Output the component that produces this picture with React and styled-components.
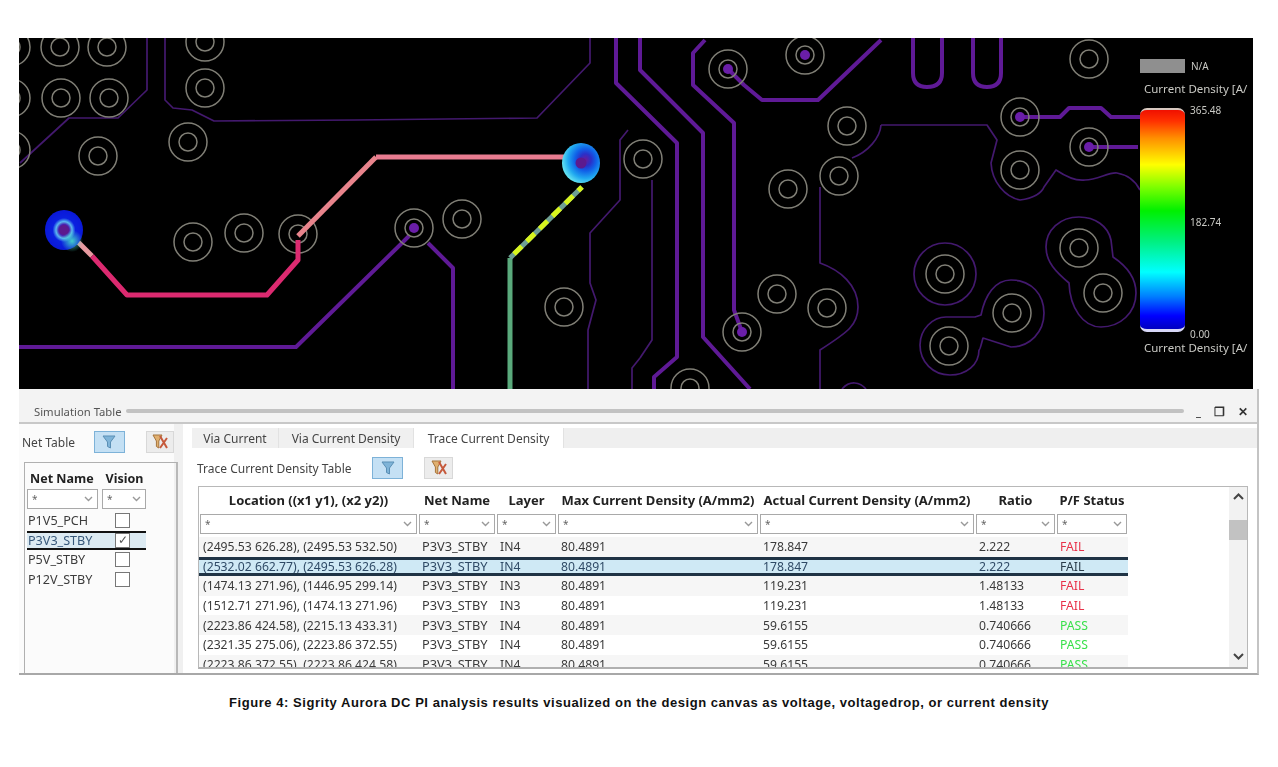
import React from "react";
import styled, { createGlobalStyle } from "styled-components";

const UI_FONT = '"Noto Sans", "Open Sans", sans-serif';

const GlobalStyle = createGlobalStyle`
  html, body {
    margin: 0;
    padding: 0;
    background: #ffffff;
  }
`;

const netRows = [
  { name: "P1V5_PCH", checked: false },
  { name: "P3V3_STBY", checked: true, selected: true },
  { name: "P5V_STBY", checked: false },
  { name: "P12V_STBY", checked: false },
];

const traceRows = [
  ["(2495.53 626.28), (2495.53 532.50)", "IN4", "178.847", "2.222", "FAIL"],
  ["(2532.02 662.77), (2495.53 626.28)", "IN4", "178.847", "2.222", "FAIL"],
  ["(1474.13 271.96), (1446.95 299.14)", "IN3", "119.231", "1.48133", "FAIL"],
  ["(1512.71 271.96), (1474.13 271.96)", "IN3", "119.231", "1.48133", "FAIL"],
  ["(2223.86 424.58), (2215.13 433.31)", "IN4", "59.6155", "0.740666", "PASS"],
  ["(2321.35 275.06), (2223.86 372.55)", "IN4", "59.6155", "0.740666", "PASS"],
  ["(2223.86 372.55), (2223.86 424.58)", "IN4", "59.6155", "0.740666", "PASS"],
];

const headers = [
  "Location ((x1 y1), (x2 y2))",
  "Net Name",
  "Layer",
  "Max Current Density (A/mm2)",
  "Actual Current Density (A/mm2)",
  "Ratio",
  "P/F Status",
];

const vias = [
  [11, 47], [60, 47], [107, 47], [205, 42], [11, 98], [61, 98], [109, 98], [205, 88],
  [11, 150], [98, 156], [188, 142], [193, 242], [244, 233], [298, 234], [414, 228],
  [462, 219], [564, 307], [643, 159], [728, 69], [805, 55], [1089, 59], [847, 126],
  [1020, 117], [1089, 147], [1020, 170], [839, 176], [788, 189], [777, 294], [827, 308],
  [742, 332], [945, 274], [1012, 313], [949, 346], [1079, 248], [1103, 293], [690, 388],
];

const viaPads = [[414, 228], [728, 69], [805, 55], [1020, 117], [1089, 147], [742, 332]];

const thickTraces = [
  "M19 347 L296 347 L402 243 L409 236",
  "M428 243 L453 268 L453 389",
  "M616 38 L616 83 L677 143 L677 357 L654 377 L654 389",
  "M640 38 L640 70 L703 133 L703 337 L750 389",
  "M705 40 L693 53 L693 85 L734 123 L734 310 L742 332",
  "M728 69 L744 85 L762 100 L818 100 L881 40",
  "M913 38 L913 73 Q913 87 927 87 Q942 87 942 73 L942 38",
  "M973 38 L973 73 Q973 87 987 87 Q1001 87 1001 73 L1001 38",
  "M1020 117 L1060 117 L1069 108 L1101 108 L1111 117 L1140 117",
  "M1089 147 L1138 147",
];

const thinTraces = [
  "M147 38 L147 90 L118 118 L69 118 L20 163",
  "M165 38 L165 100 L173 108 L192 110 L214 121 L355 120 L537 118 L590 63 L590 38",
  "M628 130 L620 140 L620 200 L590 233 L590 283 L596 300 L588 330 L588 389",
  "M632 389 L632 368 L640 358",
  "M652 180 L652 340 L640 358",
  "M881 125 L987 125 L997 140 L991 163 C992 182 1005 197 1020 200 C1035 198 1042 192 1044 187 L1056 170 C1068 178 1078 181 1085 180 C1098 180 1108 172 1117 173 C1128 175 1136 182 1140 190",
  "M881 125 C880 138 868 152 852 158",
  "M820 187 L820 263 C840 270 858 285 858 307 C858 325 848 332 820 350 L820 389",
  "M981 315 C985 295 995 280 1011 280 C1032 280 1044 295 1044 313 C1044 332 1030 347 1011 347 L983 338 C981 345 980 350 979 350 C979 365 966 375 950 375 C933 375 920 362 920 345 C920 329 933 317 946 317 L975 317 Z",
  "M1111 240 C1108 226 1095 217 1079 217 C1060 217 1046 230 1046 247 C1046 262 1056 272 1069 283 C1070 308 1083 327 1101 327 C1120 327 1136 313 1136 293 C1136 277 1125 265 1113 257 Z",
  "M866 389 C860 382 850 380 842 389",
];

function FilterIcon() {
  return (
    <svg width="18" height="16" viewBox="0 0 18 16">
      <path d="M3 2 H15 L10.5 8 V14 L7.5 12.5 V8 Z" fill="#7fb4d8" stroke="#5a8fb5" strokeWidth="1" />
    </svg>
  );
}

function ClearFilterIcon() {
  return (
    <svg width="20" height="18" viewBox="0 0 20 18">
      <path d="M3 2 H12 L8.8 8 V15 L6.4 13.5 V8 Z" fill="#e0b070" stroke="#a5743c" strokeWidth="1" />
      <path d="M10 3 L17 15 M17 5 L10 15" stroke="#c65a3c" strokeWidth="2" fill="none" />
    </svg>
  );
}

function Chevron() {
  return (
    <svg width="9" height="6" viewBox="0 0 9 6">
      <path d="M1 1 L4.5 4.5 L8 1" stroke="#999" strokeWidth="1.4" fill="none" />
    </svg>
  );
}

function PcbDrawing() {
  return (
    <PcbSvg viewBox="19 38 1234 351">
      <defs>
        <radialGradient id="hotLeft" cx="50%" cy="50%" r="50%">
          <stop offset="0%" stopColor="#6a1a9a" />
          <stop offset="28%" stopColor="#4a20b0" />
          <stop offset="42%" stopColor="#5ab8f0" />
          <stop offset="60%" stopColor="#0a20e0" />
          <stop offset="100%" stopColor="#0a18d8" />
        </radialGradient>
        <radialGradient id="hotLeftGlow" cx="50%" cy="50%" r="50%">
          <stop offset="0%" stopColor="#48e0c8" stopOpacity="0.9" />
          <stop offset="100%" stopColor="#48e0c8" stopOpacity="0" />
        </radialGradient>
        <radialGradient id="hotRight" cx="62%" cy="42%" r="62%">
          <stop offset="0%" stopColor="#6a1a9a" />
          <stop offset="24%" stopColor="#2a30c8" />
          <stop offset="45%" stopColor="#1060e8" />
          <stop offset="75%" stopColor="#20a8f0" />
          <stop offset="100%" stopColor="#60e0f0" />
        </radialGradient>
      </defs>
      {thinTraces.map((d) => (
        <path key={d} d={d} fill="none" stroke="#43196e" strokeWidth="1.7" strokeLinejoin="round" />
      ))}
      <circle cx="945" cy="274" r="31" fill="none" stroke="#43196e" strokeWidth="1.7" />
      {thickTraces.map((d) => (
        <path key={d} d={d} fill="none" stroke="#5f1a96" strokeWidth="4" strokeLinejoin="round" />
      ))}
      {vias.map(([x, y]) => (
        <g key={`${x}-${y}`} fill="none" stroke="#807f76" strokeWidth="1.5">
          <circle cx={x} cy={y} r="19" />
          <circle cx={x} cy={y} r="9" />
        </g>
      ))}
      {viaPads.map(([x, y]) => (
        <circle key={`${x}-${y}`} cx={x} cy={y} r="5" fill="#6a1ea8" />
      ))}

      <path d="M78 242 L92 256" stroke="#e89aa0" strokeWidth="5" fill="none" />
      <path d="M92 256 L127 295 L267 295 L298 260 L298 240" stroke="#dc2a70" strokeWidth="5" fill="none" strokeLinejoin="round" />
      <path d="M298 236 L376 157" stroke="#e8848c" strokeWidth="5" fill="none" />
      <path d="M376 157 L567 157" stroke="#e87c90" strokeWidth="5" fill="none" />
      <path d="M510 389 L510 258" stroke="#5aaa7c" strokeWidth="5" fill="none" />
      <path d="M510 258 L582 187" stroke="#6f9f94" strokeWidth="5" fill="none" />
      <path d="M514 254 L582 187" stroke="#d8f51e" strokeWidth="5" strokeDasharray="11 7" fill="none" />

      <ellipse cx="64" cy="230" rx="19" ry="20" fill="url(#hotLeft)" />
      <circle cx="72" cy="241" r="11" fill="url(#hotLeftGlow)" />
      <circle cx="64" cy="230" r="5" fill="#5c1a8e" />
      <ellipse cx="581" cy="163" rx="19" ry="20" fill="url(#hotRight)" />
      <circle cx="581" cy="163" r="5.5" fill="#5c1a8e" />
    </PcbSvg>
  );
}

function Legend() {
  return (
    <LegendBox>
      <NaRow>
        <NaSwatch />
        <LegendText>N/A</LegendText>
      </NaRow>
      <LegendTitle>Current Density [A/</LegendTitle>
      <BarRow>
        <ColorBar />
        <BarLabels>
          <LegendText>365.48</LegendText>
          <LegendText>182.74</LegendText>
          <LegendText>0.00</LegendText>
        </BarLabels>
      </BarRow>
      <LegendTitle>Current Density [A/</LegendTitle>
    </LegendBox>
  );
}

function ComboFilter({ width }) {
  return (
    <Combo $width={width}>
      <span>*</span>
      <Chevron />
    </Combo>
  );
}

function NetTable() {
  return (
    <NetPane>
      <NetToolbar>
        <ToolLabel>Net Table</ToolLabel>
        <ToolButton $active>
          <FilterIcon />
        </ToolButton>
        <ToolButton>
          <ClearFilterIcon />
        </ToolButton>
      </NetToolbar>
      <NetBox>
        <NetHeader>
          <span>Net Name</span>
          <span>Vision</span>
        </NetHeader>
        <NetFilters>
          <ComboFilter width={71} />
          <ComboFilter width={44} />
        </NetFilters>
        {netRows.map((row) => (
          <NetRow key={row.name} $selected={row.selected}>
            <NetName $selected={row.selected}>{row.name}</NetName>
            <CheckBox>{row.checked ? "✓" : ""}</CheckBox>
          </NetRow>
        ))}
      </NetBox>
    </NetPane>
  );
}

function TraceTable() {
  return (
    <TableFrame>
      <TableMain>
        <GridRow>
          {headers.map((h) => (
            <HeaderCell key={h}>{h}</HeaderCell>
          ))}
        </GridRow>
        <GridRow>
          {headers.map((h) => (
            <FilterCell key={h}>
              <ComboFilter />
            </FilterCell>
          ))}
        </GridRow>
        <RowsSpacer />
        {traceRows.map((row, i) => (
          <DataRow key={row[0]} $selected={i === 1} $odd={i % 2 === 0}>
            <DataCell $selected={i === 1}>{row[0]}</DataCell>
            <NameCell $selected={i === 1}>P3V3_STBY</NameCell>
            <DataCell $selected={i === 1}>{row[1]}</DataCell>
            <DataCell $selected={i === 1}>80.4891</DataCell>
            <DataCell $selected={i === 1}>{row[2]}</DataCell>
            <DataCell $selected={i === 1}>{row[3]}</DataCell>
            <StatusCell $status={row[4]} $selected={i === 1}>
              {row[4]}
            </StatusCell>
          </DataRow>
        ))}
      </TableMain>
      <ScrollBar>
        <ScrollArrow>
          <svg width="11" height="7" viewBox="0 0 11 7">
            <path d="M1 6 L5.5 1.5 L10 6" stroke="#444" strokeWidth="2" fill="none" />
          </svg>
        </ScrollArrow>
        <ScrollThumb />
        <ScrollArrow>
          <svg width="11" height="7" viewBox="0 0 11 7">
            <path d="M1 1 L5.5 5.5 L10 1" stroke="#444" strokeWidth="2" fill="none" />
          </svg>
        </ScrollArrow>
      </ScrollBar>
    </TableFrame>
  );
}

export default function App() {
  return (
    <>
      <GlobalStyle />
      <Page>
        <Canvas>
          <PcbDrawing />
          <Legend />
        </Canvas>
        <Panel>
          <TitleBar>
            <TitleText>Simulation Table</TitleText>
            <TitleRule />
            <WindowButtons>
              <span>_</span>
              <span>❐</span>
              <span>✕</span>
            </WindowButtons>
          </TitleBar>
          <PanelBody>
            <NetTable />
            <TracePane>
              <Tabs>
                <Tab $width={86}>Via Current</Tab>
                <Tab $width={134}>Via Current Density</Tab>
                <Tab $width={149} $active>
                  Trace Current Density
                </Tab>
                <TabFill />
              </Tabs>
              <TraceToolbar>
                <ToolLabel>Trace Current Density Table</ToolLabel>
                <ToolButton $active>
                  <FilterIcon />
                </ToolButton>
                <ToolButton>
                  <ClearFilterIcon />
                </ToolButton>
              </TraceToolbar>
              <TraceTable />
            </TracePane>
          </PanelBody>
        </Panel>
        <Caption>
          Figure 4: Sigrity Aurora DC PI analysis results visualized on the design canvas as
          voltage, voltagedrop, or current density
        </Caption>
      </Page>
    </>
  );
}

const Page = styled.div`
  width: 1278px;
  height: 767px;
  padding: 38px 0 0 19px;
  box-sizing: border-box;
  overflow: hidden;
  background: #ffffff;
`;

const Canvas = styled.div`
  position: relative;
  width: 1234px;
  height: 351px;
  background: #000000;
  overflow: hidden;
`;

const PcbSvg = styled.svg`
  display: block;
  width: 1234px;
  height: 351px;
  filter: blur(0.7px);
`;

const LegendBox = styled.div`
  position: absolute;
  left: 1121px;
  top: 21px;
  width: 113px;
  display: flex;
  flex-direction: column;
  font-family: ${UI_FONT};
  color: #c9c9c4;
  filter: blur(0.4px);
`;

const NaRow = styled.div`
  display: flex;
  align-items: center;
  gap: 6px;
  height: 14px;
`;

const NaSwatch = styled.div`
  width: 45px;
  height: 14px;
  background: #8f8f8f;
`;

const LegendText = styled.span`
  font-size: 10px;
  line-height: 14px;
`;

const LegendTitle = styled.div`
  font-size: 11.5px;
  line-height: 14px;
  margin: 9px 0 0 4px;
  white-space: nowrap;
`;

const BarRow = styled.div`
  display: flex;
  gap: 5px;
  margin-top: 12px;
  height: 224px;
`;

const ColorBar = styled.div`
  width: 45px;
  height: 224px;
  box-sizing: border-box;
  border-top: 2px solid #d8c8c0;
  border-bottom: 3px solid #d8d8f8;
  border-radius: 7px;
  background: linear-gradient(
    to bottom,
    #f01000 0%,
    #ff3000 5%,
    #ff9000 13%,
    #ffff00 25%,
    #80ff00 35%,
    #00f000 46%,
    #00f080 60%,
    #00ffff 74%,
    #0080ff 85%,
    #0000ff 94%,
    #0000c0 100%
  );
`;

const BarLabels = styled.div`
  display: flex;
  flex-direction: column;
  justify-content: space-between;
  margin: -5px 0 -9px;
`;

const Panel = styled.div`
  width: 1240px;
  height: 286px;
  box-sizing: border-box;
  background: #ffffff;
  border-right: 2px solid #c4c4c4;
  border-bottom: 2px solid #a8a8a8;
  font-family: ${UI_FONT};
  color: #3a3a3a;
  display: flex;
  flex-direction: column;
  overflow: hidden;
  filter: blur(0.5px);
`;

const TitleBar = styled.div`
  height: 35px;
  flex: none;
  box-sizing: border-box;
  display: flex;
  align-items: center;
  padding: 11px 9px 0 15px;
  gap: 4px;
  background: #f3f3f3;
  border-bottom: 2px solid #c8c8c8;
`;

const TitleText = styled.span`
  font-size: 11.3px;
  color: #555;
  white-space: nowrap;
`;

const TitleRule = styled.div`
  flex: 1;
  height: 4px;
  background: #c2c2c2;
  border-radius: 2px;
`;

const WindowButtons = styled.div`
  display: flex;
  justify-content: space-between;
  margin-left: 8px;
  font-size: 12px;
  font-weight: 700;
  color: #333;
  width: 52px;
`;

const PanelBody = styled.div`
  flex: 1;
  min-height: 0;
  display: flex;
`;

const NetPane = styled.div`
  width: 164px;
  flex: none;
  box-sizing: border-box;
  padding-left: 3px;
  background: #fbfbfb;
  border-right: 9px solid #f0f0f0;
`;

const NetToolbar = styled.div`
  display: flex;
  align-items: center;
  height: 22px;
  margin-top: 7px;

  & > span {
    width: 74px;
  }

  & > div + div {
    margin-left: 21px;
  }
`;

const ToolLabel = styled.span`
  font-size: 12px;
  color: #444;
  white-space: nowrap;
`;

const ToolButton = styled.div`
  width: ${({ $active }) => ($active ? "31px" : "29px")};
  height: 22px;
  box-sizing: border-box;
  display: flex;
  align-items: center;
  justify-content: center;
  background: ${({ $active }) => ($active ? "#c4e0f4" : "#ececec")};
  border: 1px solid ${({ $active }) => ($active ? "#7db2d8" : "#d8d8d8")};
`;

const NetBox = styled.div`
  margin: 9px 0 0 2px;
  height: 240px;
  box-sizing: border-box;
  padding: 6px 0 0 2px;
  border: 1px solid #b0b0b0;
  border-bottom: none;
  border-right: 2px solid #b8b8b8;
  width: 154px;
`;

const NetHeader = styled.div`
  display: flex;
  gap: 12px;
  padding-left: 3px;
  font-size: 12.5px;
  line-height: 20px;
  font-weight: 700;
  color: #222;
  white-space: nowrap;
`;

const NetFilters = styled.div`
  display: flex;
  gap: 4px;
  margin-bottom: 2px;
`;

const Combo = styled.div`
  width: ${({ $width }) => ($width ? `${$width}px` : "100%")};
  height: 20px;
  box-sizing: border-box;
  display: flex;
  align-items: center;
  justify-content: space-between;
  padding: 0 4px;
  background: #ffffff;
  border: 1px solid #a9a9a9;
  font-size: 10px;
  color: #666;
`;

const NetRow = styled.div`
  width: 119px;
  height: 19.6px;
  box-sizing: border-box;
  display: flex;
  align-items: center;
  background: ${({ $selected }) => ($selected ? "#dceaf2" : "#fbfbfb")};
  border-top: ${({ $selected }) => ($selected ? "2px solid #111" : "none")};
  border-bottom: ${({ $selected }) => ($selected ? "2px solid #111" : "none")};
`;

const NetName = styled.span`
  width: 87px;
  padding-left: 1px;
  font-size: 12.6px;
  color: ${({ $selected }) => ($selected ? "#37587a" : "#3c3c3c")};
  white-space: nowrap;
`;

const CheckBox = styled.span`
  width: 15px;
  height: 15px;
  box-sizing: border-box;
  border: 1px solid #777;
  font-size: 12px;
  line-height: 12px;
  text-align: center;
  color: #555;
  background: #ffffff;
`;

const TracePane = styled.div`
  flex: 1;
  min-width: 0;
  background: #ffffff;
`;

const Tabs = styled.div`
  display: flex;
  height: 20px;
  margin-top: 4px;
  padding-left: 9px;
`;

const Tab = styled.div`
  width: ${({ $width }) => $width}px;
  flex: none;
  display: flex;
  align-items: center;
  justify-content: center;
  font-size: 12px;
  color: #444;
  background: ${({ $active }) => ($active ? "#ffffff" : "#f0f0f0")};
  border-right: 1px solid #e2e2e2;
  white-space: nowrap;
`;

const TabFill = styled.div`
  flex: 1;
  background: #efefef;
`;

const TraceToolbar = styled.div`
  display: flex;
  align-items: center;
  height: 22px;
  margin-top: 9px;
  padding-left: 14px;

  & > span {
    width: 175px;
  }

  & > div + div {
    margin-left: 21px;
  }
`;

const TableFrame = styled.div`
  display: flex;
  margin: 7px 0 0 15px;
  width: 1050px;
  height: 183px;
  box-sizing: border-box;
  border: 1px solid #b8b8b8;
  border-bottom: 2px solid #b0b0b0;
  overflow: hidden;
`;

const TableMain = styled.div`
  width: 1030px;
  flex: none;
`;

const GRID_COLUMNS = "219px 78px 61px 202px 216px 81px 72px";

const GridRow = styled.div`
  display: grid;
  grid-template-columns: ${GRID_COLUMNS};
  width: 929px;
`;

const HeaderCell = styled.div`
  height: 27px;
  padding-bottom: 2px;
  box-sizing: border-box;
  display: flex;
  align-items: center;
  justify-content: center;
  font-size: 13px;
  font-weight: 700;
  color: #222;
  white-space: nowrap;
`;

const FilterCell = styled.div`
  padding: 0 1px;
  height: 20px;
`;

const RowsSpacer = styled.div`
  height: 3px;
`;

const DataRow = styled.div`
  display: grid;
  grid-template-columns: ${GRID_COLUMNS};
  width: 929px;
  height: 19.6px;
  box-sizing: border-box;
  align-items: center;
  background: ${({ $selected, $odd }) =>
    $selected ? "#cfe9f5" : $odd ? "#f6f6f6" : "#ffffff"};
  border-top: ${({ $selected }) => ($selected ? "3px solid #1f3345" : "none")};
  border-bottom: ${({ $selected }) => ($selected ? "3px solid #1f3345" : "none")};
`;

const DataCell = styled.div`
  padding-left: 4px;
  font-size: 12.2px;
  line-height: 13px;
  color: ${({ $selected }) => ($selected ? "#2f4a66" : "#3a3a3a")};
  white-space: nowrap;
`;

const NameCell = styled(DataCell)`
  font-size: 12.8px;
`;

const StatusCell = styled(DataCell)`
  color: ${({ $status, $selected }) => {
    if ($selected) return "#2a3c4a";
    return $status === "FAIL" ? "#e8324a" : "#38e04a";
  }};
`;

const ScrollBar = styled.div`
  margin-left: auto;
  width: 18px;
  background: #f2f2f2;
  display: flex;
  flex-direction: column;
  align-items: center;
`;

const ScrollArrow = styled.div`
  height: 16px;
  display: flex;
  align-items: center;
  justify-content: center;
  margin-top: 1px;

  &:last-child {
    margin-top: auto;
    margin-bottom: 3px;
  }
`;

const ScrollThumb = styled.div`
  width: 18px;
  height: 20px;
  margin-top: 16px;
  background: #c2c2c2;
`;

const Caption = styled.div`
  width: 1240px;
  margin-top: 20px;
  text-align: center;
  font-family: "Liberation Sans", Arial, sans-serif;
  font-weight: 700;
  font-size: 13px;
  letter-spacing: 0.55px;
  line-height: 15px;
  color: #111;
`;
